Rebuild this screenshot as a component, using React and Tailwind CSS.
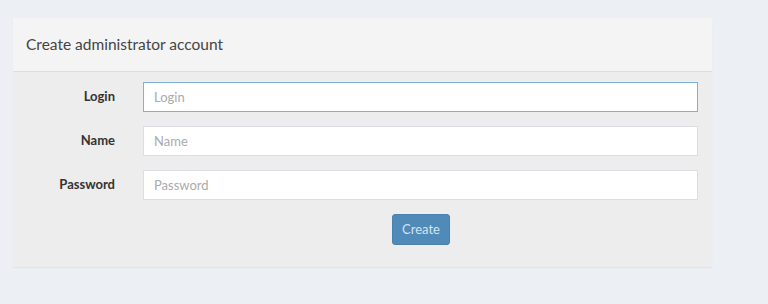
import React from "react";

const fields = [
  { label: "Login", type: "text", focused: true },
  { label: "Name", type: "text" },
  { label: "Password", type: "password" },
];

const App = () => {
  return (
    <div
      className="min-h-[304px] w-full bg-[#ecf0f5] pt-[18px] pl-[13px]"
      style={{ fontFamily: "Lato, 'Open Sans', sans-serif" }}
    >
      <div className="w-[699px] bg-[#ededed] shadow-[0_1px_1px_rgba(0,0,0,0.05)]">
        {/* Header */}
        <div className="h-[54px] bg-[#f4f4f4] border-b border-[#dedede] flex items-center px-[13px]">
          <h3 className="text-[15.5px] text-[#444]">Create administrator account</h3>
        </div>

        {/* Body */}
        <div className="pt-[10px] pb-[22px] pr-[14px]">
          {fields.map((f) => (
            <div key={f.label} className="flex items-center mb-[14px] h-[30px]">
              <label className="w-[102px] text-right text-[13px] font-bold text-[#333]">
                {f.label}
              </label>
              <input
                type={f.type}
                placeholder={f.label}
                autoFocus={f.focused}
                className={
                  "ml-[28px] flex-1 h-[30px] bg-white px-[10px] text-[13px] text-[#555] placeholder:text-[#aaa] outline-none border " +
                  (f.focused ? "border-[#7eb1db]" : "border-[#dddde3]")
                }
              />
            </div>
          ))}
          <div className="flex justify-center pl-[131px]">
            <button className="w-[58px] h-[31px] bg-[#4f8ab9] border border-[#4a82af] rounded-[3px] text-[13px] text-[#d3e4f1]">
              Create
            </button>
          </div>
        </div>
      </div>
    </div>
  );
};

export default App;
